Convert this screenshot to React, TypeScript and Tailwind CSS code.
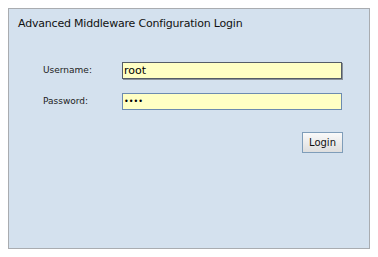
import { useState } from "react";

const App = () => {
  const [username, setUsername] = useState("root");
  const [password, setPassword] = useState("root");

  return (
    <div className="w-[378px] h-[257px] bg-white p-2 font-['DejaVu_Sans',Verdana,sans-serif]">
      <div className="w-[362px] h-[241px] border border-[#a9acb0] bg-[#d4e1ee] flex flex-col">
        <div className="pl-[9px] pt-[7px] text-[11px] tracking-[-0.2px] leading-[15px] text-[#111]">
          Advanced Middleware Configuration Login
        </div>

        <div className="mt-[31px] pl-[34px] flex flex-col gap-[14px]">
          <div className="flex items-center">
            <label className="w-[79px] text-[9px] text-[#222]">Username:</label>
            <input
              className="w-[220px] h-[17px] bg-[#ffffc4] border border-[#555c66] shadow-[1px_1px_0_#8a929c] px-[1px] text-[11px] text-black outline-none"
              value={username}
              onChange={(e) => setUsername(e.target.value)}
              autoFocus
            />
          </div>
          <div className="flex items-center">
            <label className="w-[79px] text-[9px] text-[#222]">Password:</label>
            <input
              type="password"
              className="w-[220px] h-[17px] bg-[#ffffc4] border border-[#6c8bb0] px-[1px] text-[8px] text-black outline-none"
              value={password}
              onChange={(e) => setPassword(e.target.value)}
            />
          </div>
        </div>

        <div className="flex justify-end pr-[26px] mt-[22px]">
          <button className="w-[41px] h-[21px] border border-[#7f9db9] bg-gradient-to-b from-[#fafafa] to-[#dedede] text-[10px] text-[#111]">
            Login
          </button>
        </div>
      </div>
    </div>
  );
};

export default App;
